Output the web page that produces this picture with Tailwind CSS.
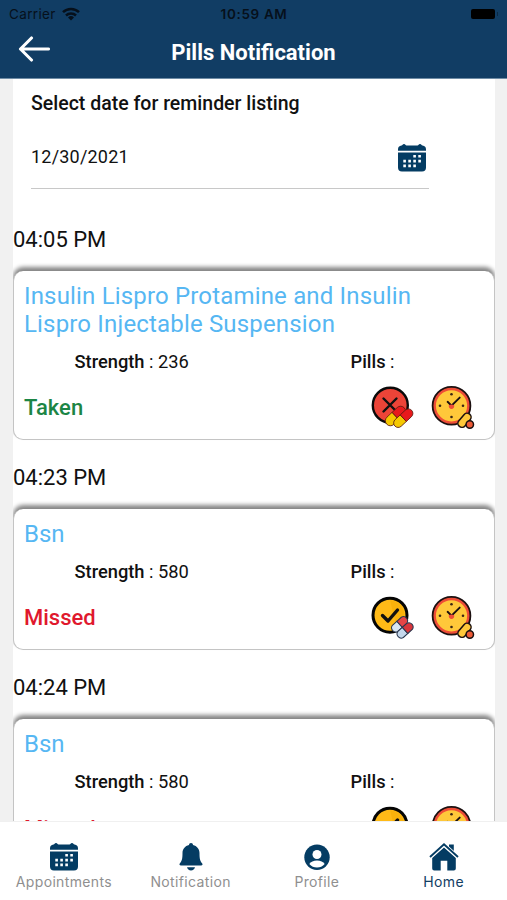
<!DOCTYPE html>
<html lang="en">
<head>
    <meta charset="UTF-8">
    <meta name="viewport" content="width=device-width, initial-scale=1.0">
    <title>Pills Notification</title>
    <script src="https://cdn.jsdelivr.net/npm/@tailwindcss/browser@4"></script>
</head>
<body class="h-screen w-full flex flex-col overflow-hidden bg-[#f1f1f1] text-[#111] font-['Roboto',sans-serif]">

    <!-- Shared icons -->
    <svg class="hidden">
        <symbol id="calendar" viewBox="0 0 28 28">
            <path fill="#043c63" d="M0 8.600h28V23.500a4 4 0 0 1-4 4H4a4 4 0 0 1-4-4zM0 6.700V5.500a4 4 0 0 1 3.500-4C4.500 1.400 4.600 0 6 0s1.500 1.400 2.500 1.400h11C20.500 1.400 20.600 0 22 0s1.500 1.400 2.500 1.500A4 4 0 0 1 28 5.500v1.200z"/>
            <path fill="#fff" d="M15.300 11h2.600v2.600h-2.600zM20.300 11h2.600v2.600h-2.600zM5.300 15.800h2.600v2.600H5.300zM10.300 15.800h2.600v2.600h-2.600zM15.300 15.800h2.600v2.600h-2.600zM20.300 15.800h2.600v2.600h-2.600zM5.300 20.600h2.600v2.600H5.300zM10.300 20.600h2.600v2.600h-2.600zM15.300 20.600h2.600v2.600h-2.600z"/>
        </symbol>
        <symbol id="cancel" viewBox="0 0 44 44">
            <circle cx="20.300" cy="19.200" r="17.500" fill="#ec4438" stroke="#0a0a0a" stroke-width="2.400"/>
            <path d="M13.500 12.500l13 13M26.500 12.500l-13 13" stroke="#111" stroke-width="2.400" stroke-linecap="round"/>
            <g stroke="#5a1c12" stroke-width=".8">
                <g transform="rotate(-43 25.500 30)">
                    <path fill="#f5c800" d="M25.500 25h-7a5 5 0 0 0 0 10h7z"/>
                    <path fill="#e8191c" d="M25.500 25h7a5 5 0 0 1 0 10h-7z"/>
                </g>
                <g transform="rotate(-43 34 31.500)">
                    <path fill="#f5c800" d="M33 27h-7a4.500 4.500 0 0 0 0 9h7z"/>
                    <path fill="#e8191c" d="M33 27h7a4.500 4.500 0 0 1 0 9h-7z"/>
                </g>
            </g>
        </symbol>
        <symbol id="check" viewBox="0 0 44 44">
            <circle cx="20" cy="19.200" r="17" fill="#ffba17" stroke="#050505" stroke-width="3"/>
            <path d="M20 4.200a15 15 0 0 1 7 28z" fill="#f4a900" opacity=".5"/>
            <path d="M12.500 19.500l5.500 5.500L27.500 14" fill="none" stroke="#111" stroke-width="3.400" stroke-linecap="round" stroke-linejoin="round"/>
            <g stroke="#28374f" stroke-width="1" transform="rotate(-42 32 31)">
                <path fill="#d9e6f4" d="M32 23.300h-6a4.200 4.200 0 0 0 0 8.200h6z"/>
                <path fill="#e64547" d="M32 23.300h6a4.200 4.200 0 0 1 0 8.200h-6z"/>
                <path fill="#c5d8ec" d="M32 31.500h-6a4.200 4.200 0 0 0 0 8.200h6z"/>
                <path fill="#d9363b" d="M32 31.500h6a4.200 4.200 0 0 1 0 8.200h-6z"/>
            </g>
        </symbol>
        <symbol id="clock" viewBox="0 0 44 44">
            <circle cx="20.500" cy="19.800" r="18.900" fill="#ee4d37" stroke="#1c1010" stroke-width="1.800"/>
            <circle cx="20.500" cy="19.800" r="15.600" fill="#ffc83a"/>
            <g fill="#3b2615">
                <circle cx="20.500" cy="8.300" r="1.300"/>
                <circle cx="20.500" cy="31" r="1.300"/>
                <circle cx="9" cy="19.800" r="1.300"/>
                <circle cx="32" cy="19.800" r="1.300"/>
            </g>
            <path d="M16.600 15.800l3.900 3.800 8.200-8" fill="none" stroke="#1c1010" stroke-width="1.900" stroke-linecap="round"/>
            <path d="M17.700 19.500q2.800-2 5.600 0q0 3.400-2.800 3.400t-2.800-3.400z" fill="#ee4d37"/>
            <g stroke="#1c1010" stroke-width="1.500">
                <rect x="25.500" y="30.300" width="16" height="8" rx="4" fill="#ffc83a" transform="rotate(-50 33.500 34.300)"/>
                <circle cx="38.800" cy="38.500" r="3.700" fill="#ee5b37"/>
            </g>
        </symbol>
    </svg>

    <header class="h-[79px] shrink-0 bg-[#113d64] border-b border-[#6f8ca5]">
        <div class="h-7 pl-[9px] pr-[11px] grid grid-cols-3 items-center text-[13.500px] text-[#06101b] font-['Inter',sans-serif]">
            <div class="flex items-center gap-[6px] tracking-[0.350px]">
                Carrier
                <svg class="w-[18px] h-[14px]" viewBox="0 0 18 14" fill="none" stroke="#06101b" stroke-width="2.500">
                    <path d="M1 5.200a11.500 11.500 0 0 1 16 0M4 8.500a7.200 7.200 0 0 1 10 0"/>
                    <path d="M9 13.500L6 10.500a4.300 4.300 0 0 1 6 0z" fill="#06101b" stroke="none"/>
                </svg>
            </div>
            <div class="pl-[3px] text-center font-semibold tracking-[0.650px]">10:59 AM</div>
            <div class="flex justify-end items-center">
                <span class="w-6 h-[10px] rounded-[2px] bg-black"></span>
                <span class="w-[1px] h-1 ml-[2px] mr-[-2px] bg-[#0b2945]"></span>
            </div>
        </div>
        <div class="h-[50px] flex items-center">
            <svg class="w-8 h-[26px] ml-[18px] mb-[8px]" viewBox="0 0 32 26" fill="none" stroke="#fff" stroke-width="3.100" stroke-linecap="round" stroke-linejoin="round">
                <path d="M13.500 2L2.500 13l11 11M2.500 13h28"/>
            </svg>
            <h1 class="flex-1 pr-[50px] text-center text-[22px] leading-7 font-bold text-white">Pills Notification</h1>
        </div>
    </header>

    <main class="flex-1 min-h-0 overflow-hidden ml-[13px] mr-[12px] bg-white">
        <div class="pl-[18px] pr-[66px]">
            <h2 class="pt-[13px] text-[19.500px] leading-6 font-medium">Select date for reminder listing</h2>
            <div class="mt-[9px] h-[64px] flex items-center justify-between border-b border-[#c8c8c8]">
                <span class="text-[18px] tracking-[0.200px]">12/30/2021</span>
                <svg class="w-7 h-7 mr-[3px] mt-[2px]"><use href="#calendar"/></svg>
            </div>
        </div>

        <div class="h-[82px] pt-[36px] text-[22px] leading-[30px]">04:05 PM</div>
        <section class="h-[169px] pt-[11px] rounded-[10px] border border-t-0 border-[#c4c4c4] bg-white shadow-[0_-4px_4px_0_#858585]">
            <h3 class="pl-[10px] text-2xl leading-7 tracking-[0.170px] text-[#56b7f3]">Insulin Lispro Protamine and Insulin<br>Lispro Injectable Suspension</h3>
            <div class="mt-[10px] h-7 pl-[60.500px] flex items-center text-[18.300px]">
                <p class="w-[276px]"><b class="font-medium">Strength</b> : 236</p>
                <p><b class="font-medium">Pills</b> :</p>
            </div>
            <div class="mt-[10px] h-11 pl-[10px] pr-[19px] flex items-center">
                <span class="flex-1 pb-px text-[22px] font-medium text-[#1c8545]">Taken</span>
                <svg class="w-11 h-11 mr-[17px]"><use href="#cancel"/></svg>
                <svg class="w-11 h-11"><use href="#clock"/></svg>
            </div>
        </section>

        <div class="h-[69px] pt-[23px] text-[22px] leading-[30px]">04:23 PM</div>
        <section class="h-[141px] pt-[11px] rounded-[10px] border border-t-0 border-[#c4c4c4] bg-white shadow-[0_-4px_4px_0_#858585]">
            <h3 class="pl-[10px] text-2xl leading-7 text-[#56b7f3]">Bsn</h3>
            <div class="mt-[10px] h-7 pl-[60.500px] flex items-center text-[18.300px]">
                <p class="w-[276px]"><b class="font-medium">Strength</b> : 580</p>
                <p><b class="font-medium">Pills</b> :</p>
            </div>
            <div class="mt-[10px] h-11 pl-[10px] pr-[19px] flex items-center">
                <span class="flex-1 pb-px text-[22px] font-medium text-[#e0182d]">Missed</span>
                <svg class="w-11 h-11 mr-[17px]"><use href="#check"/></svg>
                <svg class="w-11 h-11"><use href="#clock"/></svg>
            </div>
        </section>

        <div class="h-[69px] pt-[23px] text-[22px] leading-[30px]">04:24 PM</div>
        <section class="h-[141px] pt-[11px] rounded-[10px] border border-t-0 border-[#c4c4c4] bg-white shadow-[0_-4px_4px_0_#858585]">
            <h3 class="pl-[10px] text-2xl leading-7 text-[#56b7f3]">Bsn</h3>
            <div class="mt-[10px] h-7 pl-[60.500px] flex items-center text-[18.300px]">
                <p class="w-[276px]"><b class="font-medium">Strength</b> : 580</p>
                <p><b class="font-medium">Pills</b> :</p>
            </div>
            <div class="mt-[10px] h-11 pl-[10px] pr-[19px] flex items-center">
                <span class="flex-1 text-[22px] font-medium text-[#e0182d]">Missed</span>
                <svg class="w-11 h-11 mr-[17px]"><use href="#check"/></svg>
                <svg class="w-11 h-11"><use href="#clock"/></svg>
            </div>
        </section>
    </main>

    <nav class="h-[79px] shrink-0 grid grid-cols-4 bg-white border-t border-[#f0f0f0] text-[14px] leading-4 tracking-[0.350px] text-[#8f8f8f] font-['Inter',sans-serif]">
        <a class="pt-[21px] flex flex-col items-center gap-[3px]">
            <svg class="w-7 h-7 ml-px"><use href="#calendar"/></svg>
            <span class="pl-px">Appointments</span>
        </a>
        <a class="pt-[21px] flex flex-col items-center gap-[3px]">
            <svg class="w-7 h-7 ml-px" viewBox="0 0 28 28" fill="#043c63">
                <path d="M14 0c1.200 0 2 .8 2 2 4 1 6.500 4 6.500 8 0 6 .6 8 2.600 10.300 1 1.300.3 2.200-1 2.200H3.900c-1.300 0-2-.9-1-2.200C4.900 18 5.500 16 5.500 10c0-4 2.500-7 6.500-8 0-1.200.8-2 2-2zM10 24.300h8c-.4 2-2 3.200-4 3.200s-3.600-1.200-4-3.200z"/>
            </svg>
            <span class="pl-px">Notification</span>
        </a>
        <a class="pt-[21px] flex flex-col items-center gap-[3px]">
            <svg class="w-7 h-7" viewBox="0 0 28 28">
                <circle cx="14" cy="14.300" r="12.700" fill="#043c63"/>
                <circle cx="14" cy="11.500" r="4.500" fill="#fff"/>
                <path fill="#fff" d="M6.300 21c1.400-2.300 4.200-3.500 7.700-3.500s6.300 1.200 7.700 3.500c-2 2.400-4.700 3.500-7.700 3.500S8.300 23.400 6.300 21z"/>
            </svg>
            Profile
        </a>
        <a class="pt-[21px] flex flex-col items-center gap-[3px] text-[#113d64]">
            <svg class="w-[30px] h-7" viewBox="0 0 30 28">
                <path fill="#043c63" d="M20 1.500h4.800v9.300L20 6.300zM15 4.500l11.800 10.600V25.500a2 2 0 0 1-2 2H18.300v-9.800h-6.600v9.800H5.200a2 2 0 0 1-2-2V15.100z"/>
                <path d="M1 14L15 1.400 29 14" fill="none" stroke="#fff" stroke-width="3.600"/>
                <path d="M1 14L15 1.400 29 14" fill="none" stroke="#043c63" stroke-width="1.900"/>
            </svg>
            Home
        </a>
    </nav>
</body>
</html>
